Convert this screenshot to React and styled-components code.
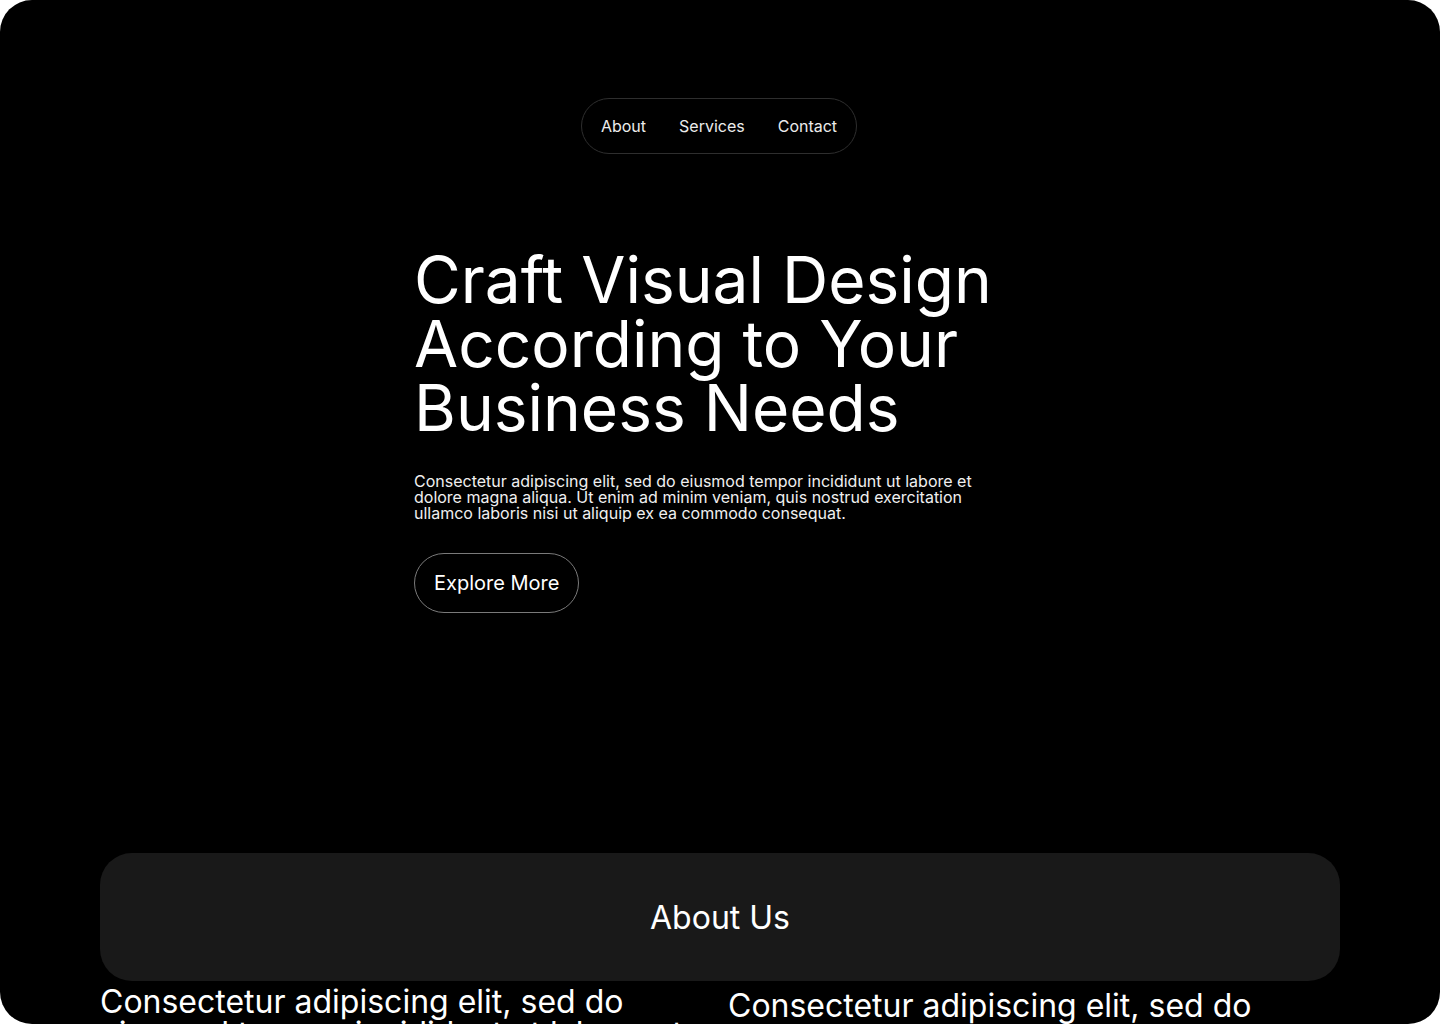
import React from "react";
import styled, { createGlobalStyle } from "styled-components";

const Global = createGlobalStyle`
  html, body { margin: 0; padding: 0; background: #ffffff; }
  * { box-sizing: border-box; }
  body { font-family: Inter, "Noto Sans", sans-serif; }
`;

const Frame = styled.div`
  width: 1440px;
  height: 1024px;
  background: #000;
  border-radius: 32px;
  overflow: hidden;
  color: #fff;
  display: flex;
  flex-direction: column;
  align-items: center;
  & > * { flex-shrink: 0; }
`;

const Nav = styled.nav`
  margin-top: 98px;
  margin-right: 2px;
  height: 56px;
  display: flex;
  align-items: center;
  gap: 33px;
  padding: 0 19px;
  border: 1px solid #2e2e2e;
  border-radius: 28px;
`;

const NavLink = styled.a`
  font-size: 16px;
  line-height: 20px;
  color: #ececec;
  text-decoration: none;
`;

const Hero = styled.section`
  width: 612px;
  margin-top: 94px;
  display: flex;
  flex-direction: column;
  align-items: flex-start;
`;

const Title = styled.h1`
  margin: 0;
  font-size: 64px;
  line-height: 64px;
  font-weight: 400;
  color: #fff;
`;

const Lead = styled.p`
  margin: 33px 0 0;
  max-width: 576px;
  font-size: 16px;
  line-height: 16px;
  color: #f0f0f0;
`;

const Button = styled.button`
  margin-top: 32px;
  height: 60px;
  padding: 0 19px;
  border: 1px solid #7a7a7a;
  border-radius: 30px;
  background: transparent;
  color: #fff;
  font-family: Inter, "Noto Sans", sans-serif;
  font-size: 20px;
  cursor: pointer;
`;

const Card = styled.div`
  margin-top: 240px;
  width: 1240px;
  height: 128px;
  background: #191919;
  border-radius: 32px;
  display: flex;
  align-items: center;
  justify-content: center;
`;

const CardTitle = styled.h2`
  margin: 2px 0 0;
  font-size: 32px;
  line-height: 32px;
  font-weight: 400;
  color: #fff;
`;

const Columns = styled.div`
  width: 1240px;
  display: grid;
  grid-template-columns: 612px 612px;
  column-gap: 16px;
`;

const ColText = styled.p`
  margin: 0;
  padding-top: ${(p) => p.$offset}px;
  font-size: 32px;
  line-height: 32px;
  color: #fff;
`;

const text =
  "Consectetur adipiscing elit, sed do eiusmod tempor incididunt ut labore et dolore magna aliqua. Ut enim ad minim veniam, quis nostrud exercitation ullamco laboris nisi ut aliquip ex ea commodo consequat.";

export default function App() {
  return (
    <>
      <Global />
      <Frame>
        <Nav>
          <NavLink href="#">About</NavLink>
          <NavLink href="#">Services</NavLink>
          <NavLink href="#">Contact</NavLink>
        </Nav>
        <Hero>
          <Title>
            Craft Visual Design
            <br />
            According to Your
            <br />
            Business Needs
          </Title>
          <Lead>{text}</Lead>
          <Button>Explore More</Button>
        </Hero>
        <Card>
          <CardTitle>About Us</CardTitle>
        </Card>
        <Columns>
          <ColText $offset={5}>{text}</ColText>
          <ColText $offset={9}>{text}</ColText>
        </Columns>
      </Frame>
    </>
  );
}
